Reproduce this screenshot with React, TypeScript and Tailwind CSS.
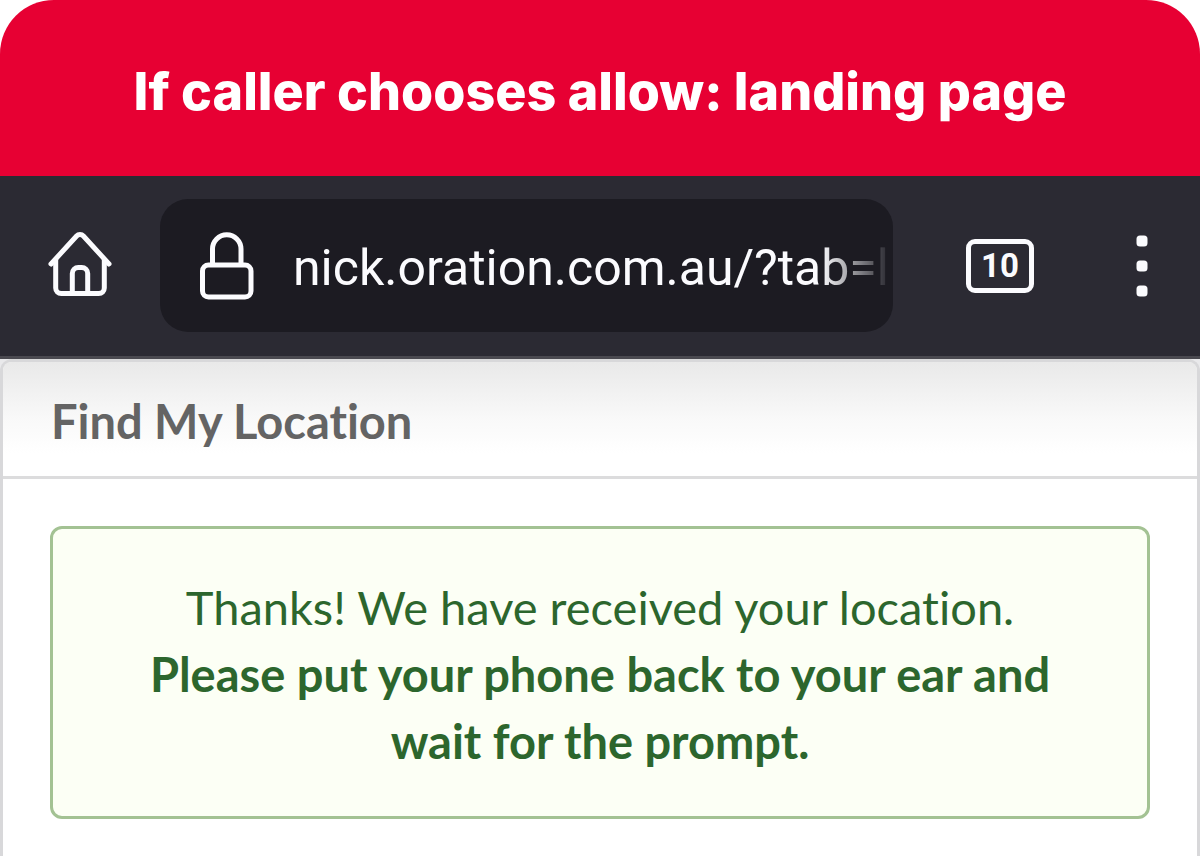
import React, { useState } from 'react';

const HomeIcon: React.FC = () => (
    <svg
        viewBox="0 0 64 64"
        className="w-16 h-16 overflow-visible"
        fill="none"
        stroke="currentColor"
        strokeWidth="5"
        strokeLinecap="round"
        strokeLinejoin="round"
        aria-hidden="true"
    >
        <path d="M3 30 28.6 2a4.6 4.6 0 0 1 6.8 0L61 30" />
        <path d="M7.7 26v28a5.5 5.5 0 0 0 5.5 5.5h37.6a5.5 5.5 0 0 0 5.5-5.5V26" />
        <path d="M24.3 59V39.5a6 6 0 0 1 6-6h3.4a6 6 0 0 1 6 6V59" />
    </svg>
);

const LockIcon: React.FC = () => (
    <svg
        viewBox="0 0 56 68"
        className="w-14 h-[68px] shrink-0"
        fill="none"
        stroke="currentColor"
        strokeWidth="5"
        aria-hidden="true"
    >
        <rect x="3.5" y="33" width="48.5" height="32" rx="6" />
        <path d="M13.5 33V17a14.25 14.25 0 0 1 28.5 0v16" />
    </svg>
);

const MenuIcon: React.FC = () => (
    <svg viewBox="0 0 12 62" className="w-3 h-[62px]" fill="currentColor" aria-hidden="true">
        <rect x="0.5" y="0.5" width="11" height="11" rx="3.5" />
        <rect x="0.5" y="25.5" width="11" height="11" rx="3.5" />
        <rect x="0.5" y="50.5" width="11" height="11" rx="3.5" />
    </svg>
);

const BrowserBar: React.FC = () => {
    const [url, setUrl] = useState('nick.oration.com.au/?tab=l');

    return (
        <nav className="flex items-center bg-[#2b2a33] border-b-3 border-[#4a4950] pl-12 pr-[52px] pt-[23px] pb-6 text-[#fbfbfe]">
            <button type="button" aria-label="Home" className="shrink-0">
                <HomeIcon />
            </button>
            <div className="flex flex-1 min-w-0 items-center h-[133px] ml-12 pl-[39px] bg-[#1c1b22] rounded-[28px]">
                <LockIcon />
                <input
                    type="text"
                    aria-label="Address"
                    value={url}
                    onChange={(e) => setUrl(e.target.value)}
                    className="flex-1 min-w-0 ml-[38px] pt-1.5 bg-transparent outline-none font-[Roboto,sans-serif] text-[50px] [mask-image:linear-gradient(to_right,black_88%,transparent)]"
                />
            </div>
            <button
                type="button"
                aria-label="Open tabs"
                className="flex items-center justify-center shrink-0 w-[68px] h-[54px] ml-[73px] border-5 border-[#fbfbfe] rounded-[9px] font-[Roboto,sans-serif] font-bold text-[33px] leading-none"
            >
                10
            </button>
            <button type="button" aria-label="Menu" className="shrink-0 ml-[102px]">
                <MenuIcon />
            </button>
        </nav>
    );
};

const LocationCard: React.FC = () => (
    <main className="flex flex-col flex-1 bg-[#e9e9eb] font-[Lato,sans-serif] text-[47px] [font-variant-ligatures:none]">
        <section className="flex-1 bg-white border-3 border-b-0 border-[#d8d8da] rounded-t-xl">
            <h2 className="px-12 pt-[30px] pb-[26px] border-b-3 border-[#dcdcdd] rounded-t-lg bg-linear-to-b from-[#e9e9e9] via-[#f9f9f9] to-white to-80% font-bold leading-[58px] text-[#646464]">
                Find My Location
            </h2>
            <div className="p-[47px]">
                <div
                    role="status"
                    className="px-12 pt-[45px] pb-[41px] border-3 border-[#a3c293] rounded-xl bg-[#fcfff5] text-center leading-[67px] text-[#2c662d]"
                >
                    <p>Thanks! We have received your location.</p>
                    <p className="font-bold">
                        Please put your phone back to your ear and wait for the prompt.
                    </p>
                </div>
            </div>
        </section>
    </main>
);

const App: React.FC = () => {
    return (
        <div className="flex flex-col min-h-screen bg-white">
            <header className="bg-[#e70033] rounded-t-[54px] px-8 pt-[62px] pb-[54px]">
                <h1 className="text-center font-[Inter,sans-serif] font-extrabold text-[52px] leading-[60px] text-white">
                    If caller chooses allow: landing page
                </h1>
            </header>
            <BrowserBar />
            <LocationCard />
        </div>
    );
};

export default App;
